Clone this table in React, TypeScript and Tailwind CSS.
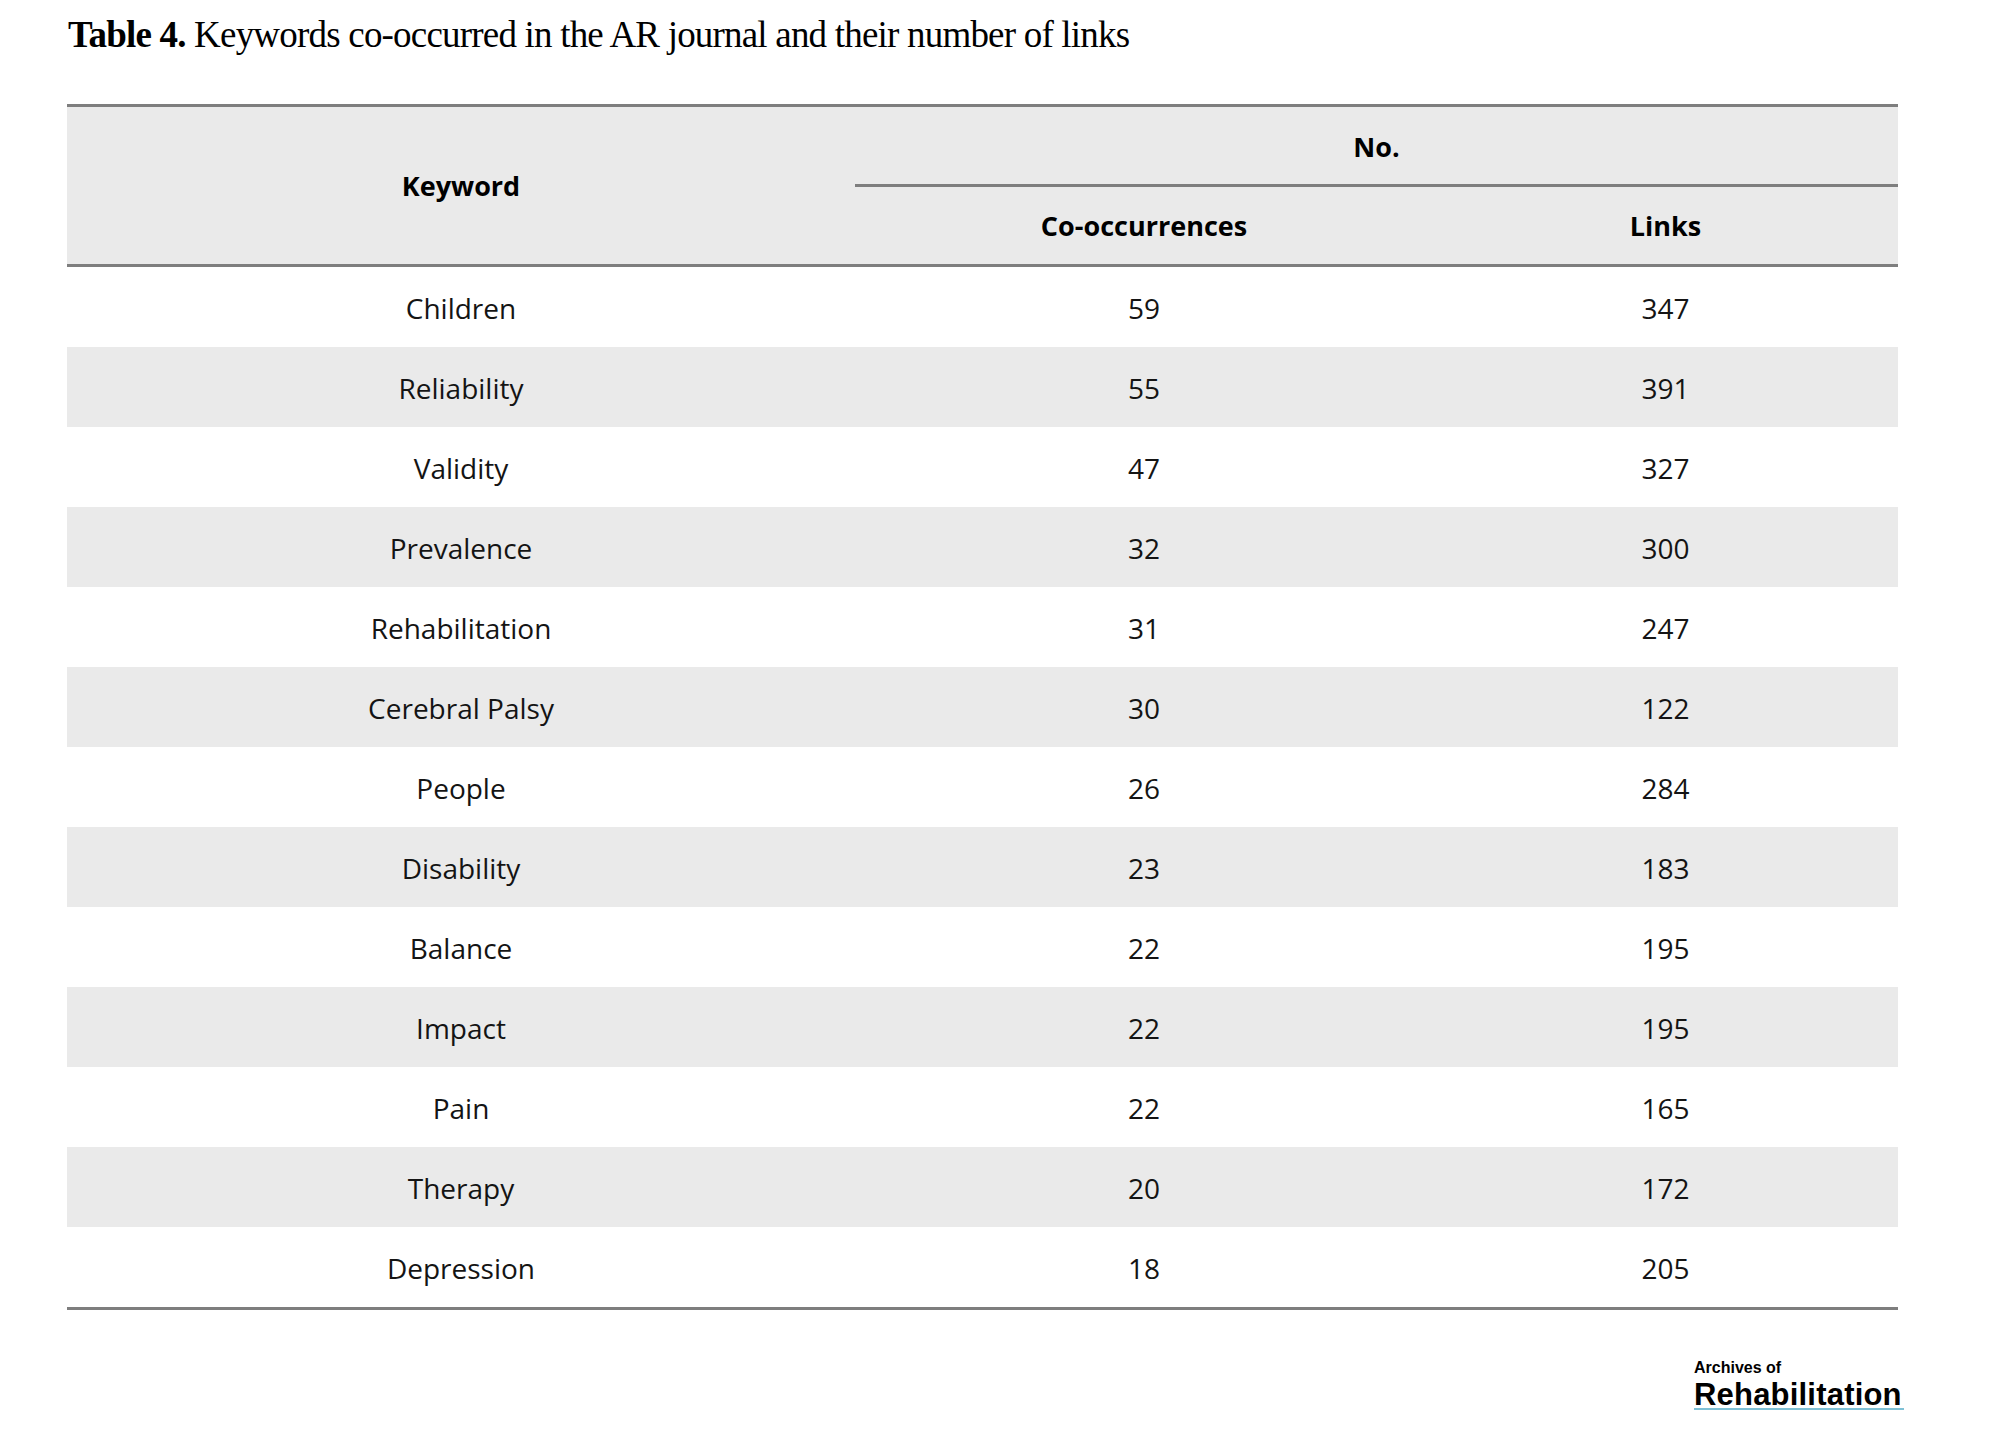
const rows: [string, number, number][] = [
  ['Children', 59, 347],
  ['Reliability', 55, 391],
  ['Validity', 47, 327],
  ['Prevalence', 32, 300],
  ['Rehabilitation', 31, 247],
  ['Cerebral Palsy', 30, 122],
  ['People', 26, 284],
  ['Disability', 23, 183],
  ['Balance', 22, 195],
  ['Impact', 22, 195],
  ['Pain', 22, 165],
  ['Therapy', 20, 172],
  ['Depression', 18, 205],
];

const cols = 'grid grid-cols-[788px_578px_1fr]';

export default function App() {
  return (
    <div className="min-h-[1450px] w-[2000px] bg-white">
      <div className="pl-[68px] pt-[16px]">
        <h1 className="font-['Liberation_Serif',serif] text-[37px] leading-[37px] tracking-[-0.8px] text-black">
          <span className="font-bold">Table 4.</span> Keywords co-occurred in the AR journal and their number of links
        </h1>
      </div>

      <div className="mx-[67px] mt-[51px] w-[1831px] font-['Open_Sans',sans-serif] text-[28px] text-[#141414]">
        {/* header */}
        <div className={`${cols} grid-rows-[80px_77px] border-y-[3px] border-[#7e7e7e] bg-[#eaeaea] text-[27px] font-bold text-black`}>
          <div className="row-span-2 flex items-center justify-center pt-[2px]">Keyword</div>
          <div className="col-span-2 flex items-center justify-center border-b-[3px] border-[#7e7e7e] pt-[3px]">No.</div>
          <div className="flex items-center justify-center pt-[2px]">Co-occurrences</div>
          <div className="flex items-center justify-center pt-[2px]">Links</div>
        </div>

        {/* body */}
        <div className="border-b-[3px] border-[#7e7e7e]">
          {rows.map(([kw, co, links], i) => (
            <div key={kw} className={`${cols} h-[80px] ${i % 2 === 1 ? 'bg-[#eaeaea]' : 'bg-white'}`}>
              <div className="flex items-center justify-center pt-[1px]">{kw}</div>
              <div className="flex items-center justify-center pt-[1px]">{co}</div>
              <div className="flex items-center justify-center pt-[1px]">{links}</div>
            </div>
          ))}
        </div>
      </div>

      {/* journal logo */}
      <div className="mt-[50px] flex justify-end pr-[96px]">
        <div className="flex w-[210px] flex-col font-['Liberation_Sans',Arial,sans-serif] font-bold text-black">
          <span className="text-[16px] leading-[16px]">Archives of</span>
          <span className="mt-[3px] text-[31px] leading-[31px] tracking-[0.2px]">Rehabilitation</span>
          <div className="-mt-[2px] h-[2px] w-[210px] bg-[#7fc1d6]" />
        </div>
      </div>
    </div>
  );
}
